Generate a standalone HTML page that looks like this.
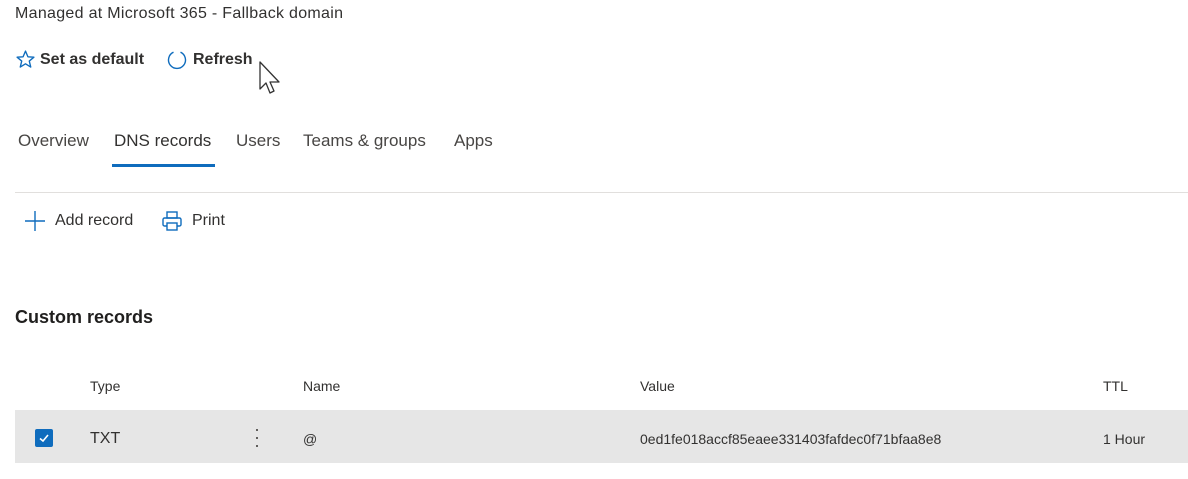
<!DOCTYPE html>
<html><head><meta charset="utf-8"><style>
body{margin:0;width:1188px;height:479px;background:#fff;font-family:"Liberation Sans",sans-serif;color:#323130;position:relative;overflow:hidden}
.a{position:absolute;white-space:nowrap;line-height:1}
</style></head><body>
<div class="a" style="left:15px;top:6px;font-size:16px;letter-spacing:0.3px">Managed at Microsoft 365 - Fallback domain</div>

<svg class="a" style="left:15px;top:49px" width="21" height="21" viewBox="0 0 20 20"><path d="M10 2 L12.3 7.4 L18 7.8 L13.6 11.5 L15 17.2 L10 14.1 L5 17.2 L6.4 11.5 L2 7.8 L7.7 7.4 Z" fill="none" stroke="#0f6cbd" stroke-width="1.3" stroke-linejoin="round"/></svg>
<div class="a" style="left:40px;top:52px;font-size:16px;font-weight:bold;color:#323130">Set as default</div>
<svg class="a" style="left:166px;top:49px" width="22" height="22" viewBox="0 0 22 22"><path d="M7.5 3.2 A8.5 8.5 0 1 0 14.5 3.2" fill="none" stroke="#0f6cbd" stroke-width="1.4"/></svg>
<div class="a" style="left:193px;top:52px;font-size:16px;font-weight:bold">Refresh</div>
<svg class="a" style="left:258px;top:60px" width="26" height="36" viewBox="0 0 26 36"><path d="M2 2 L2 29 L8 23 L12 33 L16 31 L12 22 L21 22 Z" fill="#fff" stroke="#333" stroke-width="1.3" stroke-linejoin="round"/></svg>

<div class="a" style="left:18px;top:132px;font-size:17px;color:#484644">Overview</div>
<div class="a" style="left:114px;top:132px;font-size:17px;color:#323130">DNS records</div>
<div class="a" style="left:236px;top:132px;font-size:17px;color:#484644">Users</div>
<div class="a" style="left:303px;top:132px;font-size:17px;color:#484644">Teams &amp; groups</div>
<div class="a" style="left:454px;top:132px;font-size:17px;color:#484644">Apps</div>
<div class="a" style="left:112px;top:164px;width:103px;height:3px;background:#0f6cbd"></div>
<div class="a" style="left:15px;top:192px;width:1173px;height:1px;background:#e1dfdd"></div>

<svg class="a" style="left:24px;top:210px" width="22" height="22" viewBox="0 0 22 22"><path d="M11 1 V21 M1 11 H21" stroke="#0f6cbd" stroke-width="1.4"/></svg>
<div class="a" style="left:55px;top:213px;font-size:16px">Add record</div>
<svg class="a" style="left:161px;top:210px" width="22" height="22" viewBox="0 0 22 22"><g fill="none" stroke="#0f6cbd" stroke-width="1.4"><rect x="6" y="2" width="10" height="6"/><rect x="2" y="8" width="18" height="8" rx="1.5"/><rect x="6" y="13" width="10" height="7" fill="#fff"/></g></svg>
<div class="a" style="left:192px;top:213px;font-size:16px">Print</div>

<div class="a" style="left:15px;top:308px;font-size:18px;font-weight:bold;color:#201f1e">Custom records</div>

<div class="a" style="left:90px;top:379px;font-size:14px">Type</div>
<div class="a" style="left:303px;top:379px;font-size:14px">Name</div>
<div class="a" style="left:640px;top:379px;font-size:14px">Value</div>
<div class="a" style="left:1103px;top:379px;font-size:14px">TTL</div>

<div class="a" style="left:15px;top:410px;width:1173px;height:53px;background:#e6e6e6"></div>
<div class="a" style="left:35px;top:429px;width:18px;height:18px;background:#0f6cbd;border-radius:2px"></div>
<svg class="a" style="left:35px;top:429px" width="18" height="18" viewBox="0 0 18 18"><path d="M5 9.5 L8 12 L13 6" fill="none" stroke="#fff" stroke-width="1.6"/></svg>
<div class="a" style="left:90px;top:431px;font-size:16px;color:#323130">TXT</div>
<div class="a" style="left:256px;top:429px;width:2px;height:2px;background:#605e5c"></div>
<div class="a" style="left:256px;top:437px;width:2px;height:2px;background:#605e5c"></div>
<div class="a" style="left:256px;top:445px;width:2px;height:2px;background:#605e5c"></div>
<div class="a" style="left:303px;top:432px;font-size:14px">@</div>
<div class="a" style="left:640px;top:432px;font-size:14px">0ed1fe018accf85eaee331403fafdec0f71bfaa8e8</div>
<div class="a" style="left:1103px;top:432px;font-size:14px">1 Hour</div>
</body></html>
